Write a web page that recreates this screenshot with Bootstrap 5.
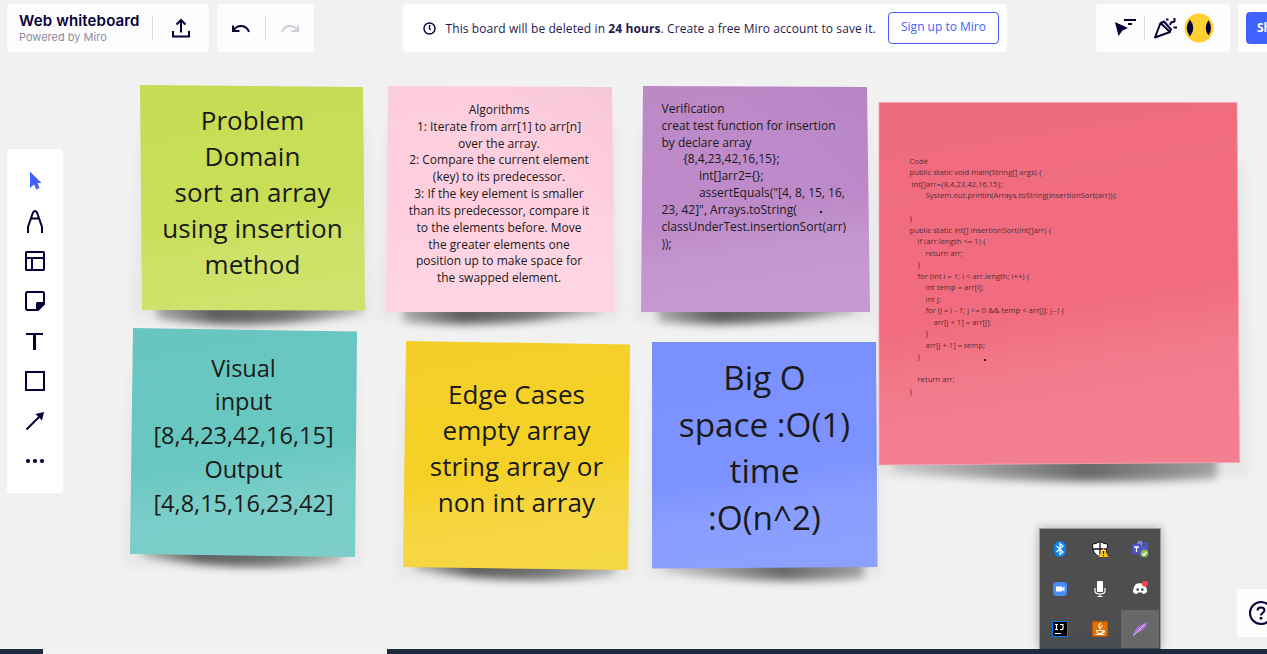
<!DOCTYPE html>
<html lang="en">
<head>
<meta charset="utf-8">
<title>Web whiteboard</title>
<meta name="viewport" content="width=device-width, initial-scale=1">
<link href="https://cdn.jsdelivr.net/npm/bootstrap@5.3.0/dist/css/bootstrap.min.css" rel="stylesheet">
<style>
  :root { --ink: #050038; --blue: #4262ff; }
  html { overflow: hidden; }
  body { height: 654px; background: #f1f1f1; font-family: "Open Sans", "Noto Sans", sans-serif; color: var(--ink); }
  svg { display: block; flex: none; }
  .panel { background: #fdfdfd; border-radius: 4px; height: 48px; flex: none; }
  .divider { width: 1px; height: 24px; background: #dcdbe2; flex: none; }
  .topbar { height: 52px; padding: 4px 0 0 7px; z-index: 5; }
  .brand { width: 145px; padding-left: 12px; font-family: Inter, "Noto Sans", sans-serif; white-space: nowrap; }
  .brand-name { font-size: 15px; font-weight: 600; line-height: 18px; letter-spacing: .15px; }
  .brand-sub { font-size: 11px; line-height: 14px; color: #8e8ba5; }
  .panel-main { width: 202px; }
  .panel-history { width: 97px; padding-left: 12px; }
  .notice { width: 604px; margin-left: 81px; padding: 0 8px 0 20px; font-size: 12px; letter-spacing: .095px; background: #fff; white-space: nowrap; }
  .notice span { margin-left: 9.5px; padding-top: 2px; color: #1f1a4d; }
  .notice b { font-weight: 670; }
  .btn-sign { width: 111px; height: 32px; padding: 0 0 2px; font-size: 12px; color: var(--blue); border: 1px solid var(--blue); border-radius: 4px; background: #fff; }
  .panel-people { width: 134px; margin-left: 81px; padding-left: 17px; }
  .panel-share { width: 29px; overflow: hidden; border-radius: 4px 0 0 4px; }
  .btn-share { width: 80px; height: 32px; padding: 0 0 0 11px; background: var(--blue); color: #fff; font-size: 12px; font-weight: 700; text-align: left; border-radius: 4px; border: 0; }
  .tools { left: 7px; top: 149px; width: 56px; height: 344px; padding-top: 12px; background: #fff; }
  .tools .tool { height: 40px; }
  .note { position: absolute; color: #1a1a1a; text-align: center; }
  .note > svg { position: absolute; left: 0; top: 0; overflow: visible; }
  .note > div { position: relative; white-space: pre; }
  .n-green { left: 140px; top: 85px; width: 225px; height: 226px; padding-top: 17px; font-size: 26px; line-height: 36.1px; letter-spacing: .08px; }
  .n-pink { left: 386px; top: 86px; width: 229px; height: 226px; padding: 16px 3px 0 0; font-size: 12px; line-height: 16.83px; }
  .n-purple { left: 641px; top: 86px; width: 229px; height: 226px; padding: 15px 0 0 20.500px; font-size: 12px; line-height: 16.83px; text-align: left; }
  .n-red { left: 879px; top: 102px; width: 361px; height: 363px; padding: 53.500px 0 0 30.500px; font-size: 7.68px; line-height: 11.5px; text-align: left; color: rgba(26,26,26,.8); }
  .n-teal { left: 130px; top: 328px; width: 227px; height: 229px; padding-top: 23.500px; font-size: 23.5px; line-height: 33.75px; }
  .n-yellow { left: 403px; top: 341px; width: 227px; height: 229px; padding-top: 35px; font-size: 26px; line-height: 36.1px; letter-spacing: .12px; }
  .n-blue { left: 652px; top: 342px; width: 226px; height: 227px; padding: 12px 1px 0 0; font-size: 33.3px; line-height: 46.7px; }
  .dot { position: absolute; width: 2px; height: 2px; background: #111; }
  .tray { left: 1039px; top: 528px; width: 122px; height: 121px; background: linear-gradient(#4e4e4e 85%, #444b52); border: 1px solid #9a9a9a; border-bottom: 0; box-shadow: 0 0 9px rgba(0,0,0,.3); display: grid; grid-template-columns: repeat(3, 40px); grid-template-rows: repeat(3, 40px); }
  .tray > div { display: flex; align-items: center; justify-content: center; }
  .tray .hot { background: #686868; height: 38px; margin: 1px 1px 1px 1px; }
  .help { left: 1237px; top: 589px; width: 30px; padding-left: 11px; border-radius: 4px 0 0 4px; overflow: hidden; }
  .taskbar { left: 0; right: 0; top: 649px; height: 5px; background: #1c2a40; }
  .taskbar div { margin-left: 43px; width: 344px; background: #f1f2f3; }
</style>
</head>
<body class="position-relative overflow-hidden">
<svg width="0" height="0" class="position-absolute">
  <defs>
    <filter id="soft" x="-20%" y="-60%" width="140%" height="220%"><feGaussianBlur stdDeviation="4"/></filter>
    <filter id="wide" x="-20%" y="-20%" width="140%" height="140%"><feGaussianBlur stdDeviation="6"/></filter>
    <linearGradient id="sheen" x1=".42" y1="0" x2=".58" y2="1"><stop offset="0" stop-color="#000" stop-opacity=".01"/><stop offset=".3" stop-color="#000" stop-opacity="0"/><stop offset=".55" stop-color="#fff" stop-opacity="0"/><stop offset=".75" stop-color="#fff" stop-opacity=".11"/><stop offset="1" stop-color="#fff" stop-opacity=".13"/></linearGradient>
    <linearGradient id="fold" x1="1" y1="0" x2=".65" y2=".35"><stop offset="0" stop-color="#204" stop-opacity=".035"/><stop offset="1" stop-color="#204" stop-opacity="0"/></linearGradient>
    <linearGradient id="shade"><stop offset="0" stop-opacity=".25"/><stop offset=".3" stop-opacity=".6"/><stop offset=".65" stop-opacity=".5"/><stop offset="1" stop-opacity=".2"/></linearGradient>
    <linearGradient id="shadeR"><stop offset="0" stop-opacity=".12"/><stop offset=".6" stop-opacity=".55"/><stop offset="1" stop-opacity=".3"/></linearGradient>
  </defs>
</svg>
<header class="topbar d-flex gap-2 position-relative">
  <div class="panel panel-main d-flex align-items-center">
    <div class="brand"><div class="brand-name">Web whiteboard</div><div class="brand-sub">Powered by Miro</div></div>
    <div class="divider"></div>
    <svg class="ms-3" width="24" height="24" viewBox="0 0 24 24" fill="none" stroke="#050038" stroke-width="2"><path d="M4 15v5.500h16V15M12 16.500V4M7.500 8.500 12 4l4.500 4.500"/></svg>
  </div>
  <div class="panel panel-history d-flex align-items-center">
    <svg width="24" height="24" viewBox="0 0 24 24" fill="none" stroke="#050038" stroke-width="2"><path d="M4 9.500V15h6.500M4.500 14.500C8 8.500 17 8 20 16"/></svg>
    <div class="divider ms-auto"></div>
    <svg class="mx-auto" width="24" height="24" viewBox="0 0 24 24" fill="none" stroke="#cfced9" stroke-width="2"><path d="M20 9.500V15h-6.500M19.500 14.500C16 8.500 7 8 4 16"/></svg>
  </div>
  <div class="notice panel d-flex align-items-center">
    <svg width="13" height="13" viewBox="0 0 13 13" fill="none" stroke="#050038" stroke-width="1.400"><circle cx="6.500" cy="6.500" r="5.500"/><path d="M6.500 3v3.800l1.300 1"/></svg>
    <span>This board will be deleted in <b>24 hours</b>. Create a free Miro account to save it.</span>
    <button class="btn btn-sign ms-auto">Sign up to Miro</button>
  </div>
  <div class="panel panel-people d-flex align-items-center">
    <svg width="24" height="24" viewBox="0 0 24 24" style="overflow:visible"><path d="M2 6l13 6-5.500 2.500L5.500 20z" fill="#050038"/><path d="M11 4h12M15 8h4" stroke="#050038" stroke-width="2"/></svg>
    <div class="divider" style="margin:0 8px 0 7px"></div>
    <svg width="24" height="24" viewBox="0 0 24 24" fill="none" stroke="#050038" stroke-width="2" stroke-linejoin="round"><path d="M2 21.500 7.500 7 17 16zM8 7l3-1.500 7 8-1.500 2.500M13 3.500h2.500M17 9l1-2.500 3.500-1V2M20.500 11.500H24"/></svg>
    <svg style="margin-left:7px" width="30" height="30" viewBox="0 0 30 30"><circle cx="15" cy="15" r="14.500" fill="#ffd02f"/><path d="M6 6.500q6.500 8.500 0 17Q-.5 15 6 6.500M24.500 7q5 8 0 15.500-5.500-7.500 0-15.500" fill="#050038"/></svg>
  </div>
  <div class="panel panel-share p-2"><button class="btn btn-share">Share</button></div>
</header>

<main>
  <section class="note n-green">
    <svg width="225" height="226"><path d="M0 40-10 235H232L228 40z" opacity=".035" filter="url(#wide)"/><path d="M14 215H222V228Q120 248 18 234z" fill="url(#shade)" filter="url(#soft)"/><path d="M0 0 223 2 225 225.500 2 225z" fill="#c8de56"/><path d="M0 0 223 2 225 225.500 2 225z" fill="url(#sheen)"/></svg>
    <div>Problem
Domain
sort an array
using insertion
method</div>
  </section>
  <section class="note n-pink">
    <svg width="229" height="226"><path d="M0 40-8 235H235L231 40z" opacity=".035" filter="url(#wide)"/><path d="M16 215H215V226Q110 244 18 236z" fill="url(#shade)" filter="url(#soft)"/><path d="M2 0 226 1 229 226H0z" fill="#ffcfdf"/><path d="M2 0 226 1 229 226H0z" fill="url(#sheen)"/><path d="M2 0 226 1 229 226H0z" fill="url(#fold)"/></svg>
    <div>Algorithms
1: Iterate from arr[1] to arr[n]
over the array.
2: Compare the current element
(key) to its predecessor.
3: If the key element is smaller
than its predecessor, compare it
to the elements before. Move
the greater elements one
position up to make space for
the swapped element.</div>
  </section>
  <section class="note n-purple">
    <svg width="229" height="226"><path d="M0 40-8 235H235L231 40z" opacity=".035" filter="url(#wide)"/><path d="M16 215H215V226Q110 244 18 236z" fill="url(#shade)" filter="url(#soft)"/><path d="M2 0 226 1 229 226H0z" fill="#be8ac9"/><path d="M2 0 226 1 229 226H0z" fill="url(#sheen)"/><path d="M2 0 226 1 229 226H0z" fill="url(#fold)"/></svg>
    <div>Verification
creat test function for insertion
by declare array
       {8,4,23,42,16,15};
            int[]arr2={};
            assertEquals("[4, 8, 15, 16,
23, 42]", Arrays.toString(
classUnderTest.insertionSort(arr)
));</div>
    <i class="dot" style="left:179px;top:125px"></i>
  </section>
  <section class="note n-blue">
    <svg width="226" height="227"><path d="M0 40-8 235H232L228 40z" opacity=".035" filter="url(#wide)"/><path d="M14 215H212V236Q120 244 10 230z" fill="url(#shadeR)" filter="url(#soft)"/><path d="M0 0H224L225.500 225 0 226.500z" fill="#7b92ff"/><path d="M0 0H224L225.500 225 0 226.500z" fill="url(#sheen)"/></svg>
    <div>Big O
space :O(1)
time
:O(n^2)</div>
  </section>
  <section class="note n-red">
    <svg width="361" height="363"><path d="M0 60V375H370L366 60z" opacity=".04" filter="url(#wide)"/><path d="M20 345H338V376Q200 386 12 370z" fill="url(#shadeR)" filter="url(#soft)"/><path d="M0 .5 358 .5 360.500 360.500 0 363z" fill="#f16c7f" stroke="#f5a3b2" stroke-width=".8"/><path d="M0 .5 358 .5 360.500 360.500 0 363z" fill="url(#sheen)"/></svg>
    <div>Code
public static void main(String[] args) {
 int[]arr={8,4,23,42,16,15};
        System.out.println(Arrays.toString(insertionSort(arr)));

}
public static int[] insertionSort(int[]arr) {
    if (arr.length &lt;= 1) {
        return arr;
    }
    for (int i = 1; i &lt; arr.length; i++) {
        int temp = arr[i];
        int j;
        for (j = i - 1; j &gt;= 0 &amp;&amp; temp &lt; arr[j]; j--) {
            arr[j + 1] = arr[j];
        }
        arr[j + 1] = temp;
    }

    return arr;
}</div>
    <i class="dot" style="left:105px;top:257px"></i>
  </section>
  <section class="note n-teal">
    <svg width="227" height="229"><path d="M0 40-8 238H232L228 40z" opacity=".035" filter="url(#wide)"/><path d="M14 215H212V234Q110 247 12 228z" fill="url(#shade)" filter="url(#soft)"/><path d="M3 0 227 3.500 225 229 0 226z" fill="#69c7c1"/><path d="M3 0 227 3.500 225 229 0 226z" fill="url(#sheen)"/></svg>
    <div>Visual
input
[8,4,23,42,16,15]
Output
[4,8,15,16,23,42]</div>
  </section>
  <section class="note n-yellow">
    <svg width="227" height="229"><path d="M0 40-8 238H232L228 40z" opacity=".035" filter="url(#wide)"/><path d="M14 215H212V234Q110 247 12 228z" fill="url(#shade)" filter="url(#soft)"/><path d="M3 0 227 3.500 225 229 0 226z" fill="#f5d128"/><path d="M3 0 227 3.500 225 229 0 226z" fill="url(#sheen)"/></svg>
    <div>Edge Cases
empty array
string array or
non int array</div>
  </section>
</main>

<aside class="tools panel position-absolute">
  <div class="tool d-flex align-items-center justify-content-center"><svg width="24" height="24" viewBox="0 0 24 24"><path d="M7 2.500 18.500 14h-4l2 5-3.200 1.500-2.200-5L7 19z" fill="#4262ff"/></svg></div>
  <div class="tool d-flex align-items-center justify-content-center"><svg width="24" height="24" viewBox="0 0 24 24" fill="none" stroke="#050038" stroke-width="2"><path d="M5 24v-6L10 3.500Q12 .5 14 3.500L19 18v6M8.500 9.500h7"/></svg></div>
  <div class="tool d-flex align-items-center justify-content-center"><svg width="24" height="24" viewBox="0 0 24 24" fill="none" stroke="#050038" stroke-width="2"><rect x="3" y="3" width="18" height="18" rx=".5"/><path d="M3 9h18M9 9v12"/></svg></div>
  <div class="tool d-flex align-items-center justify-content-center"><svg width="24" height="24" viewBox="0 0 24 24" fill="none" stroke="#050038" stroke-width="2"><path d="M4 3h16l1 1v11l-6 6H4l-1-1V4z"/><path d="M13 21v-7l1-1h7v2l-6 6z" fill="#050038" stroke="none"/></svg></div>
  <div class="tool d-flex align-items-center justify-content-center"><svg width="24" height="24" viewBox="0 0 24 24" fill="none" stroke="#050038"><path d="M3 5h17" stroke-width="2"/><path d="M11.500 5v16" stroke-width="3"/></svg></div>
  <div class="tool d-flex align-items-center justify-content-center"><svg width="24" height="24" viewBox="0 0 24 24" fill="none" stroke="#050038" stroke-width="2"><rect x="3" y="3" width="18" height="18"/></svg></div>
  <div class="tool d-flex align-items-center justify-content-center"><svg width="24" height="24" viewBox="0 0 24 24"><path d="M3.500 20.500 17 7" stroke="#050038" stroke-width="2"/><path d="M21 3l-2 8.500-6.500-6.500z" fill="#050038"/></svg></div>
  <div class="tool d-flex align-items-center justify-content-center"><svg width="24" height="24" viewBox="0 0 24 24" fill="#050038"><circle cx="5" cy="12" r="2.100"/><circle cx="12" cy="12" r="2.100"/><circle cx="19" cy="12" r="2.100"/></svg></div>
</aside>

<div class="tray position-absolute">
  <div><svg width="16" height="18" viewBox="0 0 16 18"><rect x="2" y="1" width="12" height="16" rx="6" fill="#0a84f5"/><path d="M4.500 6l6.500 6-3 2.500v-11L11 6l-6.500 6" fill="none" stroke="#fff" stroke-width="1.200"/></svg></div>
  <div><svg width="18" height="18" viewBox="0 0 18 18"><path d="M9 1.500Q5 4 1.500 4q-.5 10 7.500 13 8-3 7.500-13Q13 4 9 1.500z" fill="#fff" stroke="#111"/><path d="M9 2v15M2 9h14" stroke="#111" stroke-width="1.300"/><path d="M12.500 8 17.500 17h-10z" fill="#ffc20e"/><path d="M12.500 11v3M12.500 15v1.200" stroke="#222" stroke-width="1.200"/></svg></div>
  <div><svg width="18" height="18" viewBox="0 0 18 18"><circle cx="9" cy="3.500" r="2.800" fill="#7b83eb"/><circle cx="15" cy="4" r="2" fill="#5059c9"/><path d="M8 6h9v6q-2 5-9 4z" fill="#5059c9"/><rect x="1" y="4" width="9" height="10" fill="#4b53bc"/><path d="M3 7h5M5.500 7v5" stroke="#fff" stroke-width="1.300"/><circle cx="13.500" cy="13.500" r="3.800" fill="#8bc34a"/><path d="M11.500 13.500l1.500 1.500 2.500-3" stroke="#fff" fill="none" stroke-width="1.200"/></svg></div>
  <div><svg width="16" height="16" viewBox="0 0 16 16"><rect x="1" y="1" width="14" height="14" rx="4" fill="#4a8cf7"/><path d="M4 5.500h6v5H4zM10 7l2.500-1.500v5L10 9z" fill="#fff"/></svg></div>
  <div><svg width="14" height="18" viewBox="0 0 14 18"><rect x="4" y="1" width="6" height="11" rx="1" fill="#fff"/><path d="M2 8v3q0 3 5 3t5-3V8M7 14v3M4.500 16.500h5" fill="none" stroke="#fff" stroke-width="1.200"/></svg></div>
  <div><svg width="18" height="18" viewBox="0 0 18 18"><path d="M5 4q4-1.500 8 0 3 3 3 8-2 2-4 2l-1-1.500H7L6 14q-3 0-4-2Q2 7 5 4z" fill="#fff"/><ellipse cx="6.700" cy="9.500" rx="1.300" ry="1.600" fill="#4d4d4d"/><ellipse cx="11.300" cy="9.500" rx="1.300" ry="1.600" fill="#4d4d4d"/><circle cx="14" cy="3.800" r="3" fill="#f04747"/></svg></div>
  <div><svg width="16" height="16" viewBox="0 0 16 16"><rect x=".5" y=".5" width="15" height="15" fill="#000" stroke="#087cfa"/><path d="M3 3.500h3M4.500 3.500v5M3 8.500h3M8 3.500h3v4q0 1.500-3 1M3 12.500h6" fill="none" stroke="#fff" stroke-width="1.200"/></svg></div>
  <div><svg width="16" height="16" viewBox="0 0 16 16"><rect x=".5" y=".5" width="15" height="15" rx="1" fill="#e76f00" stroke="#b9510b"/><path d="M9 2Q5 5 8 7.500M10.500 4.500Q7.500 6 9 8M4 9.500h7v2q-3.500 2-6 0V9.500M11 10q2.500-.5 1 1.500h-1M3.500 13.500h9" fill="none" stroke="#fff" stroke-width="1.100"/></svg></div>
  <div class="hot"><svg width="16" height="16" viewBox="0 0 16 16"><path d="M1 15Q2 7 9 4q3-1 6-3.500Q15 6 11 9q-4 3-7 3.500z" fill="#a970d6"/><path d="M1 15 13 3" stroke="#e6cdf8" stroke-width=".9"/></svg></div>
</div>

<div class="help panel position-absolute d-flex align-items-center">
  <svg width="26" height="26" viewBox="0 0 26 26" fill="none" stroke="#050038" stroke-width="2"><circle cx="13" cy="13" r="11"/><path d="M9.500 10.500Q9.500 7.500 13 7.500t3.500 2.800Q16.500 12 14.500 13 13 13.800 13 15.500"/><path d="M13 17v2.500" stroke-width="2.600"/></svg>
</div>
<footer class="taskbar position-absolute d-flex"><div></div></footer>
<script src="https://cdn.jsdelivr.net/npm/bootstrap@5.3.0/dist/js/bootstrap.bundle.min.js"></script>
</body>
</html>
